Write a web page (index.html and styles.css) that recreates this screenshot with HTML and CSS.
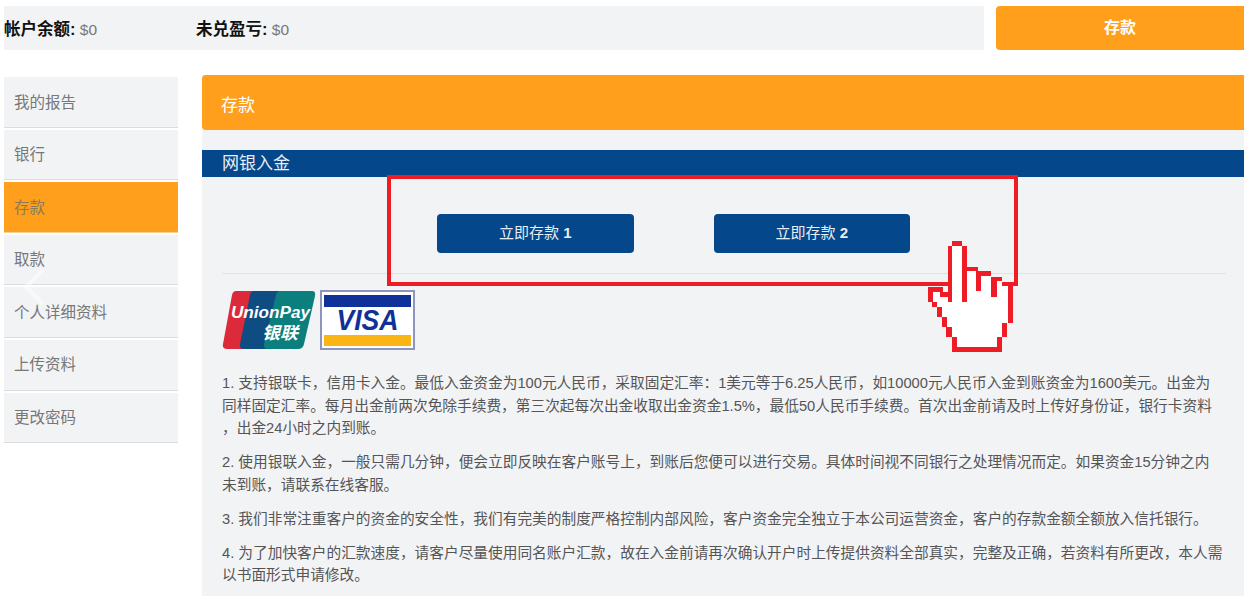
FILE: index.html
```html
<!DOCTYPE html>
<html lang="zh-CN">
<head>
    <meta charset="UTF-8">
    <meta name="viewport" content="width=device-width, initial-scale=1.0">
    <title>存款</title>
    <link rel="stylesheet" href="styles.css">
</head>
<body>
    <div class="top-row">
        <div class="balance-bar">
            <div class="balance balance-first"><b>帐户余额:</b> <span>$0</span></div>
            <div class="balance"><b>未兑盈亏:</b> <span>$0</span></div>
        </div>
        <a class="btn-deposit">存款</a>
    </div>

    <div class="content-row">
        <ul class="side-menu">
            <li>我的报告</li>
            <li>银行</li>
            <li class="active">存款</li>
            <li>取款</li>
            <li>个人详细资料</li>
            <li>上传资料</li>
            <li>更改密码</li>
        </ul>

        <div class="main">
            <div class="main-title">存款</div>
            <div class="section-title">网银入金</div>
            <div class="section-body">
                <div class="pay-buttons">
                    <a class="btn-pay">立即存款 <b>1</b></a>
                    <a class="btn-pay">立即存款 <b>2</b></a>
                </div>
                <div class="logos">
                    <svg class="logo-unionpay" viewBox="0 0 94 60" width="94" height="60">
                        <path fill="#dd2a3a" d="M14 1H40Q45 1 44 6L33 54Q32 59 26 59H5Q0 59 1 54L10 5Q11 1 14 1Z"/>
                        <path fill="#0f4c81" d="M32 1H68Q72 1 71 6L60 54Q59 59 54 59H22Q17 59 18 54L28 5Q29 1 32 1Z"/>
                        <path fill="#0b7f7d" d="M58 1H90Q94 1 93 6L82 54Q81 59 76 59H46Q41 59 42 54L54 5Q55 1 58 1Z"/>
                        <text class="up-latin" x="9" y="28" textLength="79" lengthAdjust="spacingAndGlyphs">UnionPay</text>
                        <text class="up-cjk" x="40" y="49" textLength="36" lengthAdjust="spacingAndGlyphs">银联</text>
                    </svg>
                    <svg class="logo-visa" viewBox="0 0 95 60" width="95" height="60">
                        <rect x="1" y="1" width="93" height="58" fill="#fff" stroke="#8d95bd" stroke-width="2"/>
                        <rect x="4" y="5" width="87" height="12" fill="#10309a"/>
                        <rect x="4" y="45" width="87" height="11" fill="#fab514"/>
                        <text class="visa-text" x="47.5" y="40" text-anchor="middle" textLength="62" lengthAdjust="spacingAndGlyphs">VISA</text>
                    </svg>
                </div>
                <div class="notes">
                    <p>1. 支持银联卡，信用卡入金。最低入金资金为100元人民币，采取固定汇率：1美元等于6.25人民币，如10000元人民币入金到账资金为1600美元。出金为<br>同样固定汇率。每月出金前两次免除手续费，第三次起每次出金收取出金资金1.5%，最低50人民币手续费。首次出金前请及时上传好身份证，银行卡资料<br>，出金24小时之内到账。</p>
                    <p>2. 使用银联入金，一般只需几分钟，便会立即反映在客户账号上，到账后您便可以进行交易。具体时间视不同银行之处理情况而定。如果资金15分钟之内<br>未到账，请联系在线客服。</p>
                    <p>3. 我们非常注重客户的资金的安全性，我们有完美的制度严格控制内部风险，客户资金完全独立于本公司运营资金，客户的存款金额全额放入信托银行。</p>
                    <p>4. 为了加快客户的汇款速度，请客户尽量使用同名账户汇款，故在入金前请再次确认开户时上传提供资料全部真实，完整及正确，若资料有所更改，本人需<br>以书面形式申请修改。</p>
                </div>
            </div>
        </div>
    </div>

    <!-- annotation drawn over the screenshot -->
    <div class="red-box"></div>
    <svg class="hand" viewBox="928 241 86 112" width="86" height="112" shape-rendering="crispEdges">
        <path fill="#fff" d="M952 246H962V271H977V276H991V281H1002V286H1008V323H1002V337H997V347H957V337H952V327H947V317H942V307H937V302H933V292H943V297H952Z"/>
        <path fill="#ee1c25" d="M952 241H962V246H967V267H978V271H991V277H1002V282H1008V286H1013V323H1007V337H1002V352H952V337H946V327H942V317H937V307H932V302H928V287H943V292H948V246H952V302H948V297H940V292H933V302H937V307H942V317H947V327H952V337H957V347H997V337H1002V323H1008V286H1002V281H997V297H991V276H981V291H976V271H967V302H962V246H952Z" fill-rule="evenodd"/>
    </svg>
    <svg class="carousel-arrow" viewBox="0 0 24 40" width="24" height="40">
        <path d="M21 3L4 20L21 37" fill="none" stroke="#fff" stroke-width="4"/>
    </svg>
</body>
</html>
```

FILE: styles.css
```css
* {
    box-sizing: border-box;
}

html, body {
    height: 600px;
    overflow: hidden;
}

body {
    position: relative;
    margin: 0;
    padding: 6px 4px 0;
    background-color: #fff;
    color: #555;
    font-family: "Liberation Sans", "Noto Sans CJK SC", sans-serif;
    font-size: 14.7px;
}

.top-row {
    display: flex;
    gap: 12px;
    height: 44px;
}

.balance-bar {
    flex: 1;
    display: flex;
    align-items: center;
    padding-bottom: 1px;
    background-color: #f2f3f5;
}

.balance {
    font-size: 15.5px;
    color: #777;
    white-space: nowrap;
}

.balance-first {
    width: 192px;
}

.balance b {
    color: #111;
    font-size: 16.5px;
}

.btn-deposit {
    width: 248px;
    display: flex;
    align-items: center;
    justify-content: center;
    padding-bottom: 5px;
    background-color: #ff9f1c;
    border-radius: 4px 0 0 4px;
    color: #fff;
    font-size: 16px;
    font-weight: bold;
}

.content-row {
    display: flex;
    align-items: flex-start;
    gap: 24px;
    margin-top: 25px;
}

.side-menu {
    flex: none;
    width: 174px;
    margin: 2px 0 0;
    padding: 0;
    list-style: none;
    font-size: 15.5px;
    color: #777;
}

.side-menu li {
    height: 50.6px;
    margin-bottom: 2px;
    padding-top: 12.5px;
    padding-left: 10px;
    background-color: #f2f3f5;
    border-bottom: 1px solid #dcdcdc;
}

.side-menu .active {
    background-color: #ff9f1c;
    border-bottom-color: #f5d08e;
    color: #8a7a5c;
}

.main {
    flex: 1;
    min-width: 0;
    height: 521px;
    background-color: #f2f3f5;
}

.main-title {
    height: 55px;
    padding: 16px 19px 0;
    background-color: #ff9f1c;
    border-radius: 4px 0 0 4px;
    color: #fff;
    font-size: 17px;
}

.section-title {
    height: 27px;
    margin-top: 20px;
    padding-left: 20px;
    background-color: #04478a;
    color: #e8eef5;
    font-size: 17px;
    line-height: 28px;
}

.section-body {
    padding: 0 18px 0 20px;
}

.pay-buttons {
    display: flex;
    gap: 80px;
    height: 97px;
    padding: 37px 0 0 215px;
    border-bottom: 1px solid #e2e2e2;
}

.btn-pay {
    width: 196.5px;
    height: 39px;
    background-color: #04478a;
    border-radius: 4px;
    color: #e8eef5;
    font-size: 15px;
    line-height: 38px;
    text-align: center;
}

.logos {
    display: flex;
    gap: 4px;
    margin-top: 16px;
    height: 60px;
}

.logo-unionpay text,
.logo-visa text {
    font-family: "Liberation Sans", "Noto Sans CJK SC", sans-serif;
    font-weight: bold;
    font-style: italic;
}

.up-latin {
    fill: #fff;
    font-size: 16px;
}

.up-cjk {
    fill: #fff;
    font-size: 17px;
}

.visa-text {
    fill: #10309a;
    font-size: 30px;
}

.notes {
    margin-top: 22px;
    line-height: 22.5px;
    white-space: nowrap;
}

.notes p {
    margin: 0 0 11.5px;
}

.red-box {
    position: absolute;
    left: 387px;
    top: 175px;
    width: 631px;
    height: 111px;
    border: 4px solid #ee1c25;
}

.hand {
    position: absolute;
    left: 928px;
    top: 241px;
}

.carousel-arrow {
    position: absolute;
    left: 22px;
    top: 267px;
    opacity: 0.55;
}
```
